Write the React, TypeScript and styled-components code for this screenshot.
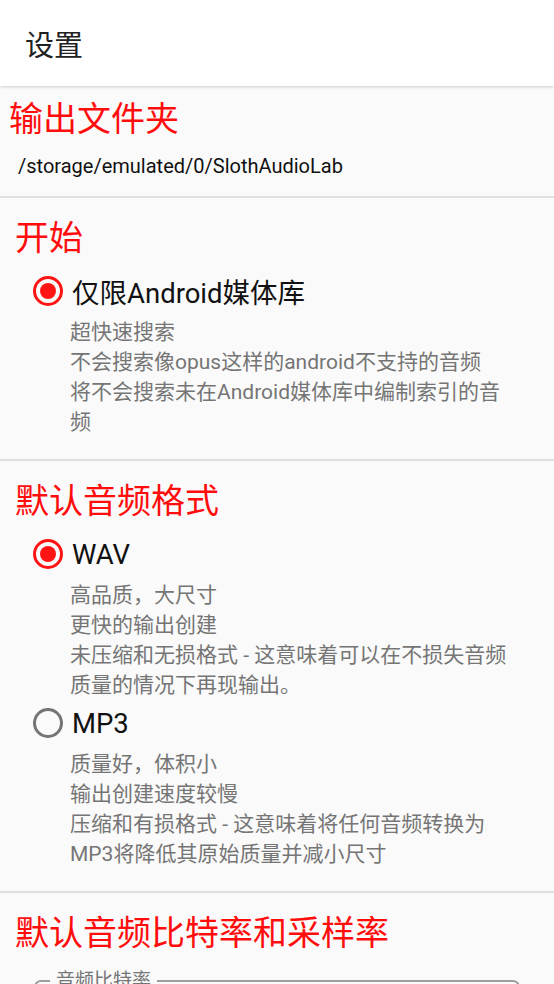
import React from "react";
import styled, { createGlobalStyle } from "styled-components";

const Global = createGlobalStyle`
  html, body { margin: 0; padding: 0; background: #fafafa; }
  body { font-family: Roboto, "Noto Sans CJK SC", sans-serif; overflow: hidden; }
  * { box-sizing: border-box; }
`;

const Page = styled.div`
  width: 554px;
  height: 984px;
  background: #fafafa;
  overflow: hidden;
`;

const AppBar = styled.header`
  height: 86px;
  background: #ffffff;
  display: flex;
  align-items: center;
  padding-left: 25px;
  box-shadow: 0 1px 3px rgba(0, 0, 0, 0.18);
  position: relative;
  z-index: 1;
`;

const AppTitle = styled.h1`
  margin: 0;
  font-size: 29px;
  font-weight: 400;
  color: #212121;
`;

const Section = styled.section<{ $first?: boolean; $last?: boolean }>`
  padding: ${(p) => (p.$first ? "11px" : "18px")} 24px ${(p) => (p.$first ? "16px" : "22px")}
    ${(p) => (p.$first ? "9px" : "15px")};
  border-bottom: ${(p) => (p.$last ? "none" : "2px solid #e0e0e0")};
`;

const SectionTitle = styled.h2`
  margin: 0;
  font-size: 34px;
  line-height: 44px;
  font-weight: 400;
  color: #ff0d0d;
`;

const PathText = styled.div`
  margin: 11px 0 0 9px;
  font-size: 20px;
  line-height: 28px;
  color: #111;
`;

const OptionList = styled.div`
  display: flex;
  flex-direction: column;
  gap: 5px;
  margin-top: 13px;
`;

const Option = styled.div`
  display: flex;
  flex-direction: column;
`;

const OptionRow = styled.label`
  display: flex;
  align-items: center;
  height: 36px;
  padding-left: 18px;
  gap: 9px;
`;

const Radio = styled.span<{ $checked?: boolean }>`
  width: 30px;
  height: 30px;
  border-radius: 50%;
  border: 3px solid ${(p) => (p.$checked ? "#ff1414" : "#757575")};
  display: flex;
  align-items: center;
  justify-content: center;
  flex: none;
  &::after {
    content: "";
    width: 16px;
    height: 16px;
    border-radius: 50%;
    background: #ff1414;
    display: ${(p) => (p.$checked ? "block" : "none")};
  }
`;

const OptionLabel = styled.span`
  font-size: 27.5px;
  color: #111;
`;

const Desc = styled.div`
  margin-top: 8px;
  padding: 0 16px 0 55px;
  font-size: 21px;
  line-height: 30px;
  color: #757575;
`;

const Field = styled.fieldset`
  margin: 16px 10px 0 19px;
  border: 2px solid #9e9e9e;
  border-radius: 7px;
  padding: 0 12px;
  height: 60px;
`;

const Legend = styled.legend`
  padding: 0 6px;
  margin-left: 2px;
  font-size: 19px;
  line-height: 20px;
  color: #757575;
`;

type Opt = { label: string; checked?: boolean; lines: string[] };

const OptionItem = ({ label, checked, lines }: Opt) => (
  <Option>
    <OptionRow>
      <Radio $checked={checked} />
      <OptionLabel>{label}</OptionLabel>
    </OptionRow>
    <Desc>
      {lines.map((l, i) => (
        <div key={i}>{l}</div>
      ))}
    </Desc>
  </Option>
);

export default function App() {
  return (
    <Page>
      <Global />
      <AppBar>
        <AppTitle>设置</AppTitle>
      </AppBar>
      <Section $first>
        <SectionTitle>输出文件夹</SectionTitle>
        <PathText>/storage/emulated/0/SlothAudioLab</PathText>
      </Section>
      <Section>
        <SectionTitle>开始</SectionTitle>
        <OptionList>
          <OptionItem
            label="仅限Android媒体库"
            checked
            lines={["超快速搜索", "不会搜索像opus这样的android不支持的音频", "将不会搜索未在Android媒体库中编制索引的音频"]}
          />
        </OptionList>
      </Section>
      <Section>
        <SectionTitle>默认音频格式</SectionTitle>
        <OptionList>
          <OptionItem
            label="WAV"
            checked
            lines={["高品质，大尺寸", "更快的输出创建", "未压缩和无损格式 - 这意味着可以在不损失音频质量的情况下再现输出。"]}
          />
          <OptionItem
            label="MP3"
            lines={["质量好，体积小", "输出创建速度较慢", "压缩和有损格式 - 这意味着将任何音频转换为MP3将降低其原始质量并减小尺寸"]}
          />
        </OptionList>
      </Section>
      <Section $last>
        <SectionTitle>默认音频比特率和采样率</SectionTitle>
        <Field>
          <Legend>音频比特率</Legend>
        </Field>
      </Section>
    </Page>
  );
}
